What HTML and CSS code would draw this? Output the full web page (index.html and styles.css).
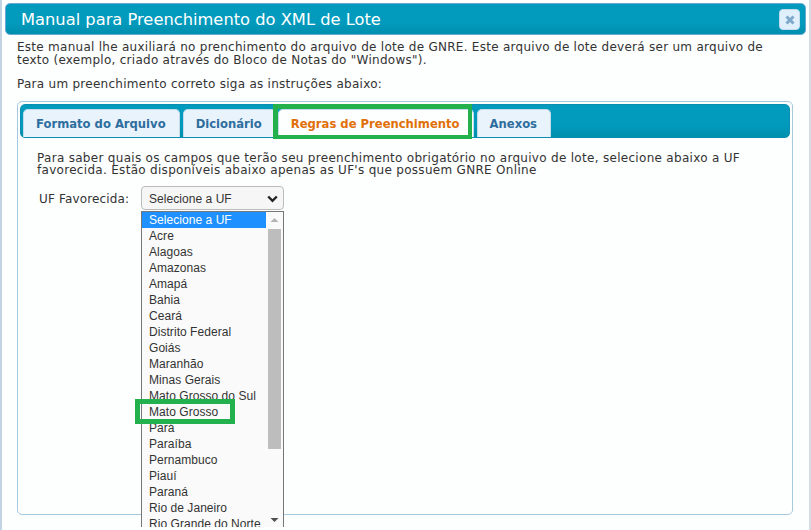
FILE: index.html
```html
<!DOCTYPE html>
<html lang="pt-BR">
<head>
<meta charset="utf-8">
<title>Manual para Preenchimento do XML de Lote</title>
<link rel="stylesheet" href="styles.css">
</head>
<body>
<div class="page">
  <div class="edge edge-left"></div>
  <main class="dialog">
    <header class="titlebar">
      <h1 class="title">Manual para Preenchimento do XML de Lote</h1>
      <button class="close" aria-label="Fechar">
        <svg width="12" height="12" viewBox="0 0 12 12"><path d="M2.5 2.5l7 7M9.5 2.5l-7 7" stroke="#7fa9cb" stroke-width="3" fill="none"/></svg>
      </button>
    </header>
    <div class="content">
      <p class="intro">Este manual lhe auxiliará no prenchimento do arquivo de lote de GNRE. Este arquivo de lote deverá ser um arquivo de texto (exemplo, criado através do Bloco de Notas do "Windows").</p>
      <p class="intro second">Para um preenchimento correto siga as instruções abaixo:</p>
      <section class="panel">
        <nav class="tabs">
          <a class="tab">Formato do Arquivo</a>
          <a class="tab">Dicionário</a>
          <a class="tab active">Regras de Preenchimento<span class="mark mark-tab"></span></a>
          <a class="tab">Anexos</a>
        </nav>
        <div class="tab-body">
          <p class="lead">Para saber quais os campos que terão seu preenchimento obrigatório no arquivo de lote, selecione abaixo a UF favorecida. Estão disponíveis abaixo apenas as UF's que possuem GNRE Online</p>
          <div class="field">
            <span class="label">UF Favorecida:</span>
            <div class="select-wrap">
              <div class="select">
                <span>Selecione a UF</span>
                <svg width="11" height="8" viewBox="0 0 11 8"><path d="M1.2 1.5L5.5 5.8l4.3-4.3" stroke="#222" stroke-width="2.4" fill="none"/></svg>
              </div>
              <div class="dropdown">
                <ul class="options">
                  <li class="selected">Selecione a UF</li>
                  <li>Acre</li>
                  <li>Alagoas</li>
                  <li>Amazonas</li>
                  <li>Amapá</li>
                  <li>Bahia</li>
                  <li>Ceará</li>
                  <li>Distrito Federal</li>
                  <li>Goiás</li>
                  <li>Maranhão</li>
                  <li>Minas Gerais</li>
                  <li>Mato Grosso do Sul</li>
                  <li>Mato Grosso</li>
                  <li>Pará</li>
                  <li>Paraíba</li>
                  <li>Pernambuco</li>
                  <li>Piauí</li>
                  <li>Paraná</li>
                  <li>Rio de Janeiro</li>
                  <li>Rio Grande do Norte</li>
                </ul>
                <div class="scrollbar">
                  <svg class="arrow" width="13" height="17" viewBox="0 0 13 17"><path d="M2.5 10L6.5 6l4 4z" fill="#b4b4b4"/></svg>
                  <div class="thumb"></div>
                  <svg class="arrow arrow-down" width="13" height="15" viewBox="0 0 13 15"><path d="M2.5 6L6.5 10l4-4z" fill="#505050"/></svg>
                </div>
              </div>
              <span class="mark mark-option"></span>
            </div>
          </div>
        </div>
      </section>
    </div>
  </main>
  <div class="edge edge-right"></div>
</div>
</body>
</html>
```
FILE: styles.css
```css
* { box-sizing: border-box; }
html, body { margin: 0; height: 100%; }
body {
  background: #fdfefe;
  color: #333;
  font-family: "DejaVu Sans", Verdana, sans-serif;
  font-size: 12px;
  overflow: hidden;
}
.page { display: flex; height: 530px; overflow: hidden; }
.edge { flex: none; width: 2px; background: #c2d3e2; }
.edge-right { width: 3px; background: #d5dde4; margin-left: 3px; }
.dialog { flex: none; width: 801px; margin-left: 3px; padding-top: 3px; display: flex; flex-direction: column; }
.titlebar {
  height: 32px;
  flex: none;
  display: flex;
  align-items: center;
  justify-content: space-between;
  padding: 0 5px 0 15px;
  border: 1px solid #6aa8d4;
  border-radius: 5px;
  background: linear-gradient(#029bbd 60%, #018fae);
  color: #fff;
}
.title { margin: 0; font-size: 16.3px; font-weight: 400; }
.close {
  width: 21px; height: 21px;
  margin-top: 1px;
  padding: 0;
  border: 1px solid #c5dbec;
  border-radius: 4px;
  background: #dfeffc;
  display: flex; align-items: center; justify-content: center;
}
.content { padding: 6px 12px 0; }
.intro { margin: 0; line-height: 13px; width: 760px; letter-spacing: .27px; }
.second { margin-top: 11px; }
.panel {
  width: 776px;
  height: 414px;
  margin-top: 10px;
  padding: 2px;
  border: 1px solid #a6c9e2;
  border-radius: 5px;
  background: #fdfefe;
}
.tabs {
  height: 34px;
  display: flex;
  align-items: flex-end;
  gap: 3px;
  padding-left: 2px;
  border: 1px solid #0a8fb0;
  border-radius: 5px;
  background: linear-gradient(#029bbd 60%, #018fae);
}
.tab {
  position: relative;
  height: 28px;
  padding: 0 13px 0 12px;
  display: flex;
  align-items: center;
  border: 1px solid #c5dbec;
  border-bottom: 0;
  border-radius: 5px 5px 0 0;
  background: #e9f3fc;
  color: #2e6e9e;
  font-size: 11.6px;
  font-weight: 700;
}
.tab.active { margin-left: -1px; background: #fdfefe; color: #e17009; }
.mark { position: absolute; border: 5px solid #22b14c; pointer-events: none; }
.mark-tab { left: -6px; right: 1px; top: -6px; bottom: -2px; border-width: 5px 4px 4px 5px; }
.mark-option { left: -6px; top: 213px; width: 100px; height: 25px; }
.tab-body { padding: 14px 0 0 17px; }
.lead { margin: 0; line-height: 12px; width: 745px; letter-spacing: .3px; }
.field { display: flex; margin-top: 10px; margin-left: 2px; }
.label { width: 102px; height: 24px; line-height: 26px; letter-spacing: .15px; }
.select-wrap { position: relative; width: 143px; }
.select {
  height: 24px;
  display: flex;
  align-items: center;
  justify-content: space-between;
  padding: 1px 5px 0 7px;
  border: 1px solid #bbb;
  border-radius: 4px;
  background: #f6f6f6;
  font-family: "Liberation Sans", Arial, sans-serif;
  letter-spacing: .05px;
}
.dropdown {
  position: absolute;
  left: 0; top: 25px;
  width: 143px;
  height: 316px;
  display: flex;
  overflow: hidden;
  border: 1px solid #767676;
  border-bottom: 0;
  background: #fafafa;
  font-family: "Liberation Sans", Arial, sans-serif;
  letter-spacing: .05px;
}
.options { flex: 1; min-width: 0; margin: 0; padding: 0; list-style: none; }
.options li { height: 16px; line-height: 16px; padding-left: 7px; white-space: nowrap; overflow: hidden; }
.options .selected { background: #1e90ff; color: #fff; }
.scrollbar { flex: none; width: 17px; padding: 0 2px; display: flex; flex-direction: column; }
.arrow { flex: none; display: block; }
.thumb { flex: none; height: 220px; background: #bdbdbd; }
.arrow-down { margin-top: auto; }
```
